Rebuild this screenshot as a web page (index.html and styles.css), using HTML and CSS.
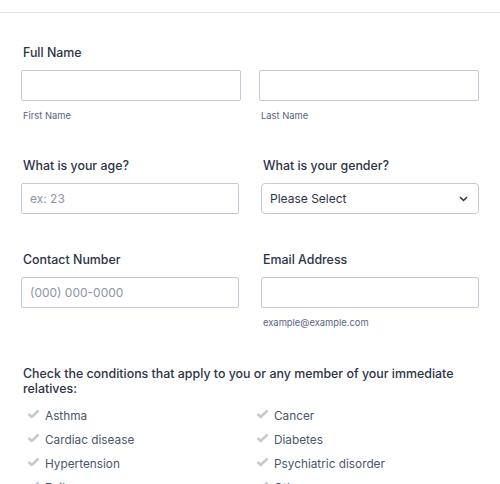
FILE: index.html
```html
<!DOCTYPE html>
<html>
<head>
<meta charset="utf-8">
<link rel="stylesheet" href="styles.css">
</head>
<body>
<div class="form">
  <div class="field">
    <div class="label">Full Name</div>
    <div class="name-row">
      <div class="col">
        <div class="input"></div>
        <div class="sublabel">First Name</div>
      </div>
      <div class="col">
        <div class="input"></div>
        <div class="sublabel">Last Name</div>
      </div>
    </div>
  </div>

  <div class="row row-age">
    <div class="col">
      <div class="label">What is your age?</div>
      <div class="input"><span class="placeholder">ex: 23</span></div>
    </div>
    <div class="col">
      <div class="label">What is your gender?</div>
      <div class="input select">
        <span class="value">Please Select</span>
        <svg class="chev" width="9" height="6" viewBox="0 0 9 6"><polyline points="1,1 4.5,4.5 8,1" fill="none" stroke="#2c3345" stroke-width="1.5"/></svg>
      </div>
    </div>
  </div>

  <div class="row row-contact">
    <div class="col">
      <div class="label">Contact Number</div>
      <div class="input"><span class="placeholder">(000) 000-0000</span></div>
    </div>
    <div class="col">
      <div class="label">Email Address</div>
      <div class="input"></div>
      <div class="sublabel">example@example.com</div>
    </div>
  </div>

  <div class="field checks">
    <div class="label wrap">Check the conditions that apply to you or any member of your immediate relatives:</div>
    <div class="check-grid">
      <div class="item"><svg class="tick" width="13" height="10" viewBox="0 0 13 10"><polyline points="1.5,5 4.8,8 11.5,1.5" fill="none" stroke="#c6cad4" stroke-width="2.6"/></svg><span>Asthma</span></div>
      <div class="item"><svg class="tick" width="13" height="10" viewBox="0 0 13 10"><polyline points="1.5,5 4.8,8 11.5,1.5" fill="none" stroke="#c6cad4" stroke-width="2.6"/></svg><span>Cancer</span></div>
      <div class="item"><svg class="tick" width="13" height="10" viewBox="0 0 13 10"><polyline points="1.5,5 4.8,8 11.5,1.5" fill="none" stroke="#c6cad4" stroke-width="2.6"/></svg><span>Cardiac disease</span></div>
      <div class="item"><svg class="tick" width="13" height="10" viewBox="0 0 13 10"><polyline points="1.5,5 4.8,8 11.5,1.5" fill="none" stroke="#c6cad4" stroke-width="2.6"/></svg><span>Diabetes</span></div>
      <div class="item"><svg class="tick" width="13" height="10" viewBox="0 0 13 10"><polyline points="1.5,5 4.8,8 11.5,1.5" fill="none" stroke="#c6cad4" stroke-width="2.6"/></svg><span>Hypertension</span></div>
      <div class="item"><svg class="tick" width="13" height="10" viewBox="0 0 13 10"><polyline points="1.5,5 4.8,8 11.5,1.5" fill="none" stroke="#c6cad4" stroke-width="2.6"/></svg><span>Psychiatric disorder</span></div>
      <div class="item"><svg class="tick" width="13" height="10" viewBox="0 0 13 10"><polyline points="1.5,5 4.8,8 11.5,1.5" fill="none" stroke="#c6cad4" stroke-width="2.6"/></svg><span>Epilepsy</span></div>
      <div class="item"><svg class="tick" width="13" height="10" viewBox="0 0 13 10"><polyline points="1.5,5 4.8,8 11.5,1.5" fill="none" stroke="#c6cad4" stroke-width="2.6"/></svg><span>Other</span></div>
    </div>
  </div>
</div>
</body>
</html>
```

FILE: styles.css
```css
html, body {
  margin: 0;
  padding: 0;
  background: #ffffff;
  font-family: Inter, "Noto Sans", sans-serif;
  color: #2c3345;
}

.form {
  margin-top: 12px;
  border-top: 1px solid #e3e5ec;
  padding: 30px 21px 0 21px;
}

.label {
  font-size: 12.4px;
  font-weight: 500;
  line-height: 20px;
  height: 20px;
  padding-left: 2px;
  margin-bottom: 7px;
  color: #2c3345;
  white-space: nowrap;
}

.label.wrap {
  white-space: normal;
  height: auto;
  line-height: 15px;
  margin-bottom: 8px;
}

.name-row {
  display: grid;
  grid-template-columns: 220px 220px;
  column-gap: 18px;
}

.row {
  display: grid;
  grid-template-columns: 218px 218px;
  column-gap: 22px;
}

.row-age {
  margin-top: 33px;
}

.row-contact {
  margin-top: 36px;
}

.checks {
  margin-top: 36px;
}

.input {
  box-sizing: border-box;
  height: 31px;
  border: 1px solid #c3cad8;
  border-radius: 2px;
  background: #fff;
  display: flex;
  align-items: center;
  padding: 0 8px;
  font-size: 12px;
}

.placeholder {
  color: #8d94a4;
}

.select {
  border-radius: 4px;
  justify-content: space-between;
  padding-right: 10px;
}

.select .value {
  color: #2c3345;
}

.chev {
  display: block;
}

.sublabel {
  font-size: 9.4px;
  line-height: 14px;
  margin-top: 8px;
  padding-left: 2px;
  color: #57647e;
}

.check-grid {
  display: grid;
  grid-template-columns: 229px 229px;
  padding-left: 6px;
}

.item {
  display: flex;
  align-items: flex-start;
  height: 24px;
  font-size: 11.8px;
  line-height: 24px;
  color: #4b556b;
}

.tick {
  display: block;
  margin-top: 5px;
  margin-right: 5px;
  flex: none;
}
```
